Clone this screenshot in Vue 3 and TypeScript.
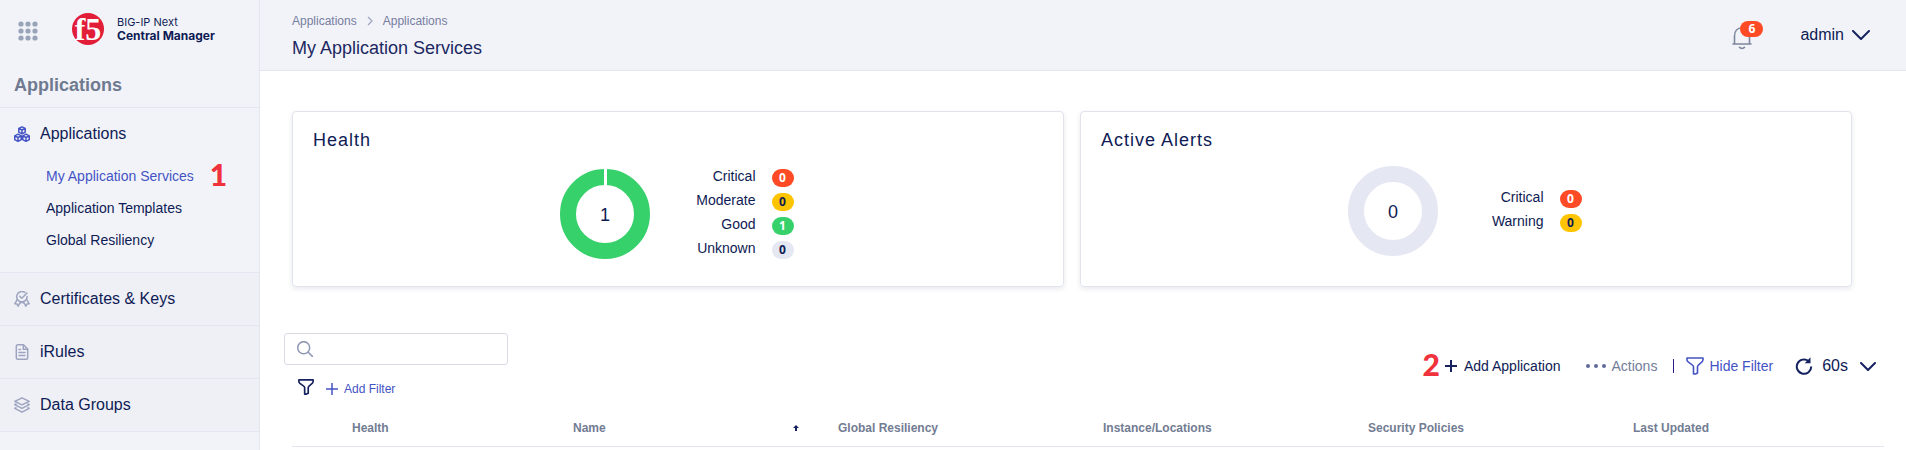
<script setup lang="ts">
interface Count {
  label: string
  value: number
  tone: string
}

const subLinks: { label: string; active: boolean }[] = [
  { label: 'My Application Services', active: true },
  { label: 'Application Templates', active: false },
  { label: 'Global Resiliency', active: false },
]

const health: Count[] = [
  { label: 'Critical', value: 0, tone: 'red' },
  { label: 'Moderate', value: 0, tone: 'amber' },
  { label: 'Good', value: 1, tone: 'green' },
  { label: 'Unknown', value: 0, tone: 'grey' },
]

const alerts: Count[] = [
  { label: 'Critical', value: 0, tone: 'red' },
  { label: 'Warning', value: 0, tone: 'amber' },
]

const columns: string[] = ['Health', 'Name', 'Global Resiliency', 'Instance/Locations', 'Security Policies', 'Last Updated']
const dots: number[] = [3, 10, 17]
</script>

<template>
  <div class="page">
    <aside class="sidebar">
      <div class="brand">
        <button class="plain grid-btn" aria-label="App switcher">
          <svg width="20" height="20" viewBox="0 0 20 20" fill="#9aa4b8">
            <template v-for="y in dots" :key="y">
              <circle v-for="x in dots" :key="x" :cx="x" :cy="y" r="2.6" />
            </template>
          </svg>
        </button>
        <svg class="logo" width="32" height="32" viewBox="0 0 32 32">
          <circle cx="16" cy="16" r="16" fill="#e21d38" />
          <text x="16" y="27" text-anchor="middle" class="logo-text">f5</text>
        </svg>
        <div class="brand-name">
          <span>BIG-IP Next</span>
          <strong>Central Manager</strong>
        </div>
      </div>
      <h2 class="side-title">Applications</h2>
      <nav>
        <div class="group">
          <a href="#" class="nav-item">
            <svg width="16" height="16" viewBox="0 0 16 16" fill="none" stroke="#4453c4" stroke-width="1.5" stroke-linejoin="round">
              <path d="M8 .8l3.2 1.6v3.8L8 7.8 4.800 6.200V2.400zM4.800 2.400L8 4l3.200-1.600M8 4v3.800" />
              <path d="M4 8.200l3.300 1.600v3.800L4 15.300.7 13.600V9.800zM.7 9.800L4 11.500l3.300-1.700M4 11.500v3.800" />
              <path d="M12 8.200l3.300 1.600v3.800L12 15.300l-3.300-1.700V9.800zM8.700 9.800l3.300 1.700 3.300-1.700M12 11.500v3.800" />
            </svg>
            Applications
          </a>
          <ul class="sub">
            <li v-for="link in subLinks" :key="link.label">
              <a href="#" :class="{ active: link.active }">{{ link.label }}</a>
              <span v-if="link.active" class="callout">1</span>
            </li>
          </ul>
        </div>
        <a href="#" class="nav-item shaded">
          <svg width="16" height="16" viewBox="0 0 16 16" fill="none" stroke="#9da4c0" stroke-width="1.5" stroke-linecap="round" stroke-linejoin="round">
            <path d="M10.800 1.400A5.200 5.200 0 1 0 13.100 5.500" />
            <path d="M5.800 5.300l2 2L13 2" />
            <path d="M3.200 8.500L.8 12.800l2.200.1 1.100 2.300L6.500 11M12.800 8.500l2.400 4.300-2.200.1-1.100 2.300L9.500 11M5.800 12.400L8 10.800l2.200 1.600" />
          </svg>
          Certificates &amp; Keys
        </a>
        <a href="#" class="nav-item shaded">
          <svg width="16" height="16" viewBox="0 0 16 16" fill="none" stroke="#9da4c0" stroke-width="1.5" stroke-linecap="round" stroke-linejoin="round">
            <path d="M9.500.8H3.800a1.500 1.500 0 0 0-1.500 1.500v11.400a1.500 1.500 0 0 0 1.500 1.500h8.400a1.500 1.500 0 0 0 1.500-1.500V5z" />
            <path d="M9.300 1v4.200h4.200M5 5.500h1.500M5 8.500h6M5 11.500h6" />
          </svg>
          iRules
        </a>
        <a href="#" class="nav-item shaded">
          <svg width="16" height="16" viewBox="0 0 16 16" fill="none" stroke="#9da4c0" stroke-width="1.5" stroke-linejoin="round">
            <path d="M8 .8l7.200 3.500L8 7.800.8 4.300z" />
            <path d="M2.500 6.700L.8 7.700 8 11.400l7.200-3.700-1.700-1M2.500 10.300l-1.700 1L8 15.200l7.200-3.900-1.700-1" />
          </svg>
          Data Groups
        </a>
      </nav>
    </aside>

    <main class="main">
      <header class="topbar">
        <div>
          <nav class="crumbs" aria-label="Breadcrumb">
            <a href="#">Applications</a>
            <svg width="6" height="10" viewBox="0 0 6 10" fill="none" stroke="#9da4c0" stroke-width="1.200"><path d="M1 1l4 4-4 4" /></svg>
            <a href="#">Applications</a>
          </nav>
          <h1>My Application Services</h1>
        </div>
        <div class="user-area">
          <button class="plain bell" aria-label="Notifications">
            <svg width="20" height="24" viewBox="0 0 20 24" fill="none" stroke="#7c869c" stroke-width="1.600" stroke-linecap="round" stroke-linejoin="round">
              <path d="M1 18h18M2.500 18V10c0-5 3-8.300 7.500-8.300s7.500 3.300 7.500 8.300v8M7.500 21.300c1 1.500 4 1.500 5 0" />
            </svg>
            <span class="bell-badge">6</span>
          </button>
          <button class="plain user">
            admin
            <svg width="18" height="10" viewBox="0 0 18 10" fill="none" stroke="#16225f" stroke-width="2" stroke-linecap="round" stroke-linejoin="round"><path d="M1 1l8 8 8-8" /></svg>
          </button>
        </div>
      </header>

      <section class="cards">
        <article class="card">
          <h3>Health</h3>
          <div class="card-body health-body">
            <svg width="90" height="90" viewBox="0 0 90 90">
              <circle cx="45" cy="45" r="37" fill="none" stroke="#37d16b" stroke-width="16" />
              <rect x="44" y="0" width="3" height="17" fill="#fff" />
              <text x="45" y="52" text-anchor="middle" class="donut-num">1</text>
            </svg>
            <ul class="counts">
              <li v-for="c in health" :key="c.label"><span class="count-label">{{ c.label }}</span><span class="pill" :class="c.tone">{{ c.value }}</span></li>
            </ul>
          </div>
        </article>
        <article class="card">
          <h3>Active Alerts</h3>
          <div class="card-body">
            <svg width="90" height="90" viewBox="0 0 90 90">
              <circle cx="45" cy="45" r="37" fill="none" stroke="#e5e7f3" stroke-width="16" />
              <text x="45" y="52" text-anchor="middle" class="donut-num">0</text>
            </svg>
            <ul class="counts">
              <li v-for="c in alerts" :key="c.label"><span class="count-label">{{ c.label }}</span><span class="pill" :class="c.tone">{{ c.value }}</span></li>
            </ul>
          </div>
        </article>
      </section>

      <section class="tools">
        <div>
          <label class="search">
            <svg width="16" height="16" viewBox="0 0 16 16" fill="none" stroke="#8f97b5" stroke-width="1.500" stroke-linecap="round"><circle cx="6.700" cy="6.700" r="6" /><path d="M11.200 11.200l4.200 4.200" /></svg>
            <input type="text" aria-label="Search" />
          </label>
          <div class="filters">
            <svg width="16" height="16" viewBox="0 0 18 18" fill="none" stroke="#16225f" stroke-width="1.900" stroke-linejoin="round"><path d="M1 1h16v2c0 2.500-5.500 4.500-5.500 6.500V16l-2 1H7.500V9.500C7.500 7.500 1 5.500 1 3z" /></svg>
            <button class="plain add-filter">
              <svg width="12" height="12" viewBox="0 0 12 12" stroke="#4453c4" stroke-width="1.500"><path d="M6 0v12M0 6h12" /></svg>
              Add Filter
            </button>
          </div>
        </div>
        <div class="actions">
          <span class="callout">2</span>
          <button class="plain add-app">
            <svg width="12" height="12" viewBox="0 0 12 12" stroke="#16225f" stroke-width="2"><path d="M6 0v12M0 6h12" /></svg>
            Add Application
          </button>
          <button class="plain more">
            <svg width="20" height="4" viewBox="0 0 20 4" fill="#5f6a9a"><circle cx="2" cy="2" r="2" /><circle cx="10" cy="2" r="2" /><circle cx="18" cy="2" r="2" /></svg>
            Actions
          </button>
          <span class="bar"></span>
          <button class="plain hide">
            <svg width="18" height="18" viewBox="0 0 18 18" fill="none" stroke="#4453c4" stroke-width="1.600" stroke-linejoin="round"><path d="M1 1h16v2c0 2.500-5.500 4.500-5.500 6.500V16l-2 1H7.500V9.500C7.500 7.500 1 5.500 1 3z" /></svg>
            Hide Filter
          </button>
          <button class="plain refresh" aria-label="Refresh">
            <svg width="18" height="18" viewBox="0 0 18 18" fill="none" stroke="#16225f" stroke-width="2"><path d="M13.500 4A7.200 7.200 0 1 0 16.200 9.500" /><path d="M15.500.3v5.900H9.700z" fill="#16225f" stroke="none" /></svg>
          </button>
          <button class="plain interval">
            60s
            <svg width="16" height="9" viewBox="0 0 16 9" fill="none" stroke="#16225f" stroke-width="2" stroke-linecap="round" stroke-linejoin="round"><path d="M1 1l7 7 7-7" /></svg>
          </button>
        </div>
      </section>

      <div class="table-wrap">
        <table>
          <thead>
            <tr>
              <td class="check-col"></td>
              <th v-for="(c, i) in columns" :key="c" scope="col" :class="{ 'health-col': i === 0 }">
                <div class="th">
                  {{ c }}
                  <svg v-if="c === 'Name'" width="6" height="6" viewBox="0 0 6 6" fill="#16225f"><path d="M3 0l3 3H4v3H2V3H0z" /></svg>
                </div>
              </th>
            </tr>
          </thead>
        </table>
      </div>
    </main>
  </div>
</template>

<style>
body {
  margin: 0;
  background: #fff;
}
</style>

<style scoped>
.page {
  display: flex;
  min-height: 100vh;
  font-family: 'Liberation Sans', Arial, sans-serif;
  font-size: 14px;
  color: #0e1b54;
}
.page * {
  box-sizing: border-box;
}
a {
  color: inherit;
  text-decoration: none;
}
ul {
  list-style: none;
  margin: 0;
  padding: 0;
}
svg {
  flex: none;
  display: block;
}
.plain {
  display: flex;
  align-items: center;
  border: 0;
  padding: 0;
  background: none;
  font: inherit;
  color: inherit;
}
.sidebar {
  flex: none;
  width: 260px;
  background: #f2f3f9;
  border-right: 1px solid #e3e5f1;
}
.brand {
  display: flex;
  align-items: center;
  height: 62px;
  padding-left: 18px;
}
.logo {
  margin: 0 13px 4px 34px;
  overflow: visible;
}
.logo-text {
  font: bold 32px 'Liberation Serif', 'Times New Roman', serif;
  fill: #fff;
}
.brand-name {
  display: flex;
  flex-direction: column;
  font: 11px/14px Inter, sans-serif;
  padding-bottom: 4px;
}
.brand-name strong {
  font-size: 12px;
  font-weight: 700;
}
.side-title {
  margin: 0;
  height: 46px;
  padding-left: 14px;
  font-size: 18px;
  line-height: 46px;
  color: #6f7a90;
  border-bottom: 1px solid #e3e5f1;
}
.group {
  padding-bottom: 16px;
  border-bottom: 1px solid #e3e5f1;
}
.nav-item {
  display: flex;
  align-items: center;
  gap: 10px;
  height: 52px;
  padding-left: 14px;
  font-size: 16px;
}
.shaded {
  height: 53px;
  background: #eff0f6;
  border-bottom: 1px solid #e3e5f1;
}
.sub li {
  display: flex;
  align-items: center;
  gap: 16px;
  height: 32px;
  padding-left: 46px;
}
.sub .active {
  color: #4453c4;
}
.callout {
  padding-bottom: 4px;
  font: 900 30px/32px Lato, 'Open Sans', sans-serif;
  color: #f0323c;
}
.main {
  flex: 1;
  min-width: 0;
}
.topbar {
  display: flex;
  justify-content: space-between;
  height: 71px;
  padding: 14px 36px 0 32px;
  background: #f2f3f9;
  border-bottom: 1px solid #e1e5f0;
}
.crumbs {
  display: flex;
  align-items: center;
  gap: 10px;
  height: 14px;
  font-size: 12px;
  color: #767e9f;
}
h1 {
  margin: 8px 0 0;
  font-size: 18px;
  line-height: 24px;
  font-weight: 400;
  color: #1c2861;
}
.user-area {
  display: flex;
  align-items: center;
  gap: 48px;
  height: 42px;
}
.bell {
  position: relative;
  margin-top: 6px;
}
.bell-badge {
  position: absolute;
  left: 8px;
  top: -5px;
  width: 23px;
  border-radius: 8px;
  background: #ff4a26;
  color: #fff;
  font: bold 12px/16px 'Open Sans', sans-serif;
  text-align: center;
}
.user {
  gap: 8px;
  font-size: 16px;
}
.cards {
  display: grid;
  grid-template-columns: 1fr 1fr;
  gap: 16px;
  padding: 40px 54px 0 32px;
}
.card {
  height: 176px;
  padding: 19px 20px;
  border: 1px solid #e1e3ee;
  border-radius: 4px;
  box-shadow: 0 2px 5px rgba(30, 35, 80, 0.1);
}
.card h3 {
  margin: 0;
  font-size: 18px;
  line-height: 18px;
  font-weight: 400;
  letter-spacing: 1px;
}
.card-body {
  display: flex;
  align-items: center;
  justify-content: center;
  height: 124px;
  padding-right: 3px;
}
.health-body {
  height: 130px;
}
.donut-num {
  font: 18px 'Liberation Sans', sans-serif;
  fill: #0e1b54;
}
.counts {
  margin-left: 46px;
}
.counts li {
  display: flex;
  align-items: center;
  gap: 16px;
  height: 24px;
}
.count-label {
  width: 60px;
  line-height: 20px;
  padding-bottom: 4px;
  text-align: right;
}
.pill {
  width: 22px;
  border-radius: 9px;
  font: bold 12px/18px 'Open Sans', sans-serif;
  text-align: center;
}
.red {
  background: #ff4a26;
  color: #fff;
}
.amber {
  background: #ffc400;
}
.green {
  background: #37d16b;
  color: #fff;
}
.grey {
  background: #e5e7f3;
}
.tools {
  display: flex;
  justify-content: space-between;
  align-items: flex-start;
  padding: 46px 30px 0 24px;
}
.search {
  display: flex;
  align-items: center;
  gap: 8px;
  width: 224px;
  height: 32px;
  padding: 0 12px;
  border: 1px solid #d9dbe5;
  border-radius: 3px;
}
.search input {
  flex: 1;
  min-width: 0;
  border: 0;
  outline: 0;
  background: none;
  font: inherit;
}
.filters {
  display: flex;
  align-items: center;
  gap: 12px;
  height: 20px;
  margin: 12px 0 0 14px;
}
.add-filter {
  gap: 6px;
  padding-top: 3px;
  font-size: 12px;
  color: #4453c4;
}
.actions {
  display: flex;
  align-items: center;
  height: 32px;
  margin-top: 17px;
}
.add-app {
  gap: 7px;
  margin-left: 5px;
}
.more {
  gap: 5px;
  margin-left: 26px;
  color: #737d99;
}
.bar {
  width: 1px;
  height: 14px;
  margin: 0 12px 0 16px;
  background: #2a1a8a;
}
.hide {
  gap: 5px;
  color: #4453c4;
}
.refresh {
  margin: 0 9px 0 22px;
}
.interval {
  gap: 12px;
  font-size: 16px;
}
.table-wrap {
  padding: 11px 22px 0 32px;
}
table {
  width: 100%;
  table-layout: fixed;
  border-collapse: collapse;
}
th,
td {
  height: 38px;
  padding: 2px 25px 0 14px;
  border-bottom: 1px solid #e3e4ee;
  font-size: 12px;
  text-align: left;
  color: #727c93;
}
.check-col {
  width: 46px;
}
.health-col {
  width: 221px;
}
.th {
  display: flex;
  align-items: center;
  justify-content: space-between;
}
</style>
